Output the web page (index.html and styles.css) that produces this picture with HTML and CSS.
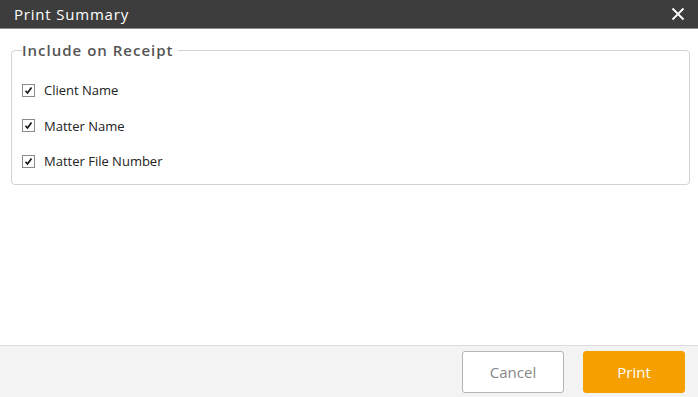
FILE: index.html
```html
<!DOCTYPE HTML>
<html>
    <head>
        <title>Print Summary</title>
        <link rel="stylesheet" href="styles.css">
    </head>

    <body>
        <div class="dialog">
            <div class="titlebar">
                <span class="title">Print Summary</span>
                <svg class="close" width="14" height="14" viewBox="0 0 14 14">
                    <path d="M1.5 1.5 L12.5 12.5 M12.5 1.5 L1.5 12.5" stroke="#fff" stroke-width="1.8" fill="none"/>
                </svg>
            </div>

            <div class="content">
                <fieldset class="receipt">
                    <legend>Include on Receipt</legend>
                    <label class="option"><span class="box"><svg width="11" height="11" viewBox="0 0 11 11"><path d="M2.5 5.8 L4.5 8 L8.5 2.5" stroke="#111" stroke-width="1.6" fill="none"/></svg></span>Client Name</label>
                    <label class="option"><span class="box"><svg width="11" height="11" viewBox="0 0 11 11"><path d="M2.5 5.8 L4.5 8 L8.5 2.5" stroke="#111" stroke-width="1.6" fill="none"/></svg></span>Matter Name</label>
                    <label class="option"><span class="box"><svg width="11" height="11" viewBox="0 0 11 11"><path d="M2.5 5.8 L4.5 8 L8.5 2.5" stroke="#111" stroke-width="1.6" fill="none"/></svg></span>Matter File Number</label>
                </fieldset>
            </div>

            <div class="footer">
                <button class="btn cancel">Cancel</button>
                <button class="btn print">Print</button>
            </div>
        </div>
    </body>
</html>
```

FILE: styles.css
```css
body {
    margin: 0;
    font-family: "Open Sans", "Noto Sans", sans-serif;
    background: #fff;
}
.dialog {
    width: 698px;
    height: 397px;
    display: flex;
    flex-direction: column;
}
.titlebar {
    height: 28px;
    background: #3d3d3d;
    border-bottom: 1px solid #8a8a8a;
    display: flex;
    align-items: center;
    justify-content: space-between;
    padding: 0 13px 0 14px;
}
.title {
    color: #fff;
    font-size: 15px;
    letter-spacing: 0.8px;
}
.content {
    flex: 1;
    padding: 11px 8px 0 11px;
}
fieldset.receipt {
    margin: 0;
    border: 1px solid #d3d3d3;
    border-radius: 4px;
    padding: 19px 10px 12px 10px;
    display: flex;
    flex-direction: column;
    gap: 13.5px;
}
legend {
    padding: 0 4px 0 0;
    font-size: 15px;
    font-weight: 600;
    color: #555;
    letter-spacing: 1px;
}
.option {
    display: flex;
    align-items: center;
    font-size: 13px;
    color: #222;
    height: 22px;
}
.box {
    width: 11px;
    height: 11px;
    border: 1px solid #8a8a8a;
    background: #fff;
    margin-right: 9px;
    display: flex;
}
.footer {
    height: 51px;
    background: #f3f3f3;
    border-top: 1px solid #dcdcdc;
    display: flex;
    justify-content: flex-end;
    align-items: center;
    gap: 19px;
    padding: 0 13px 0 0;
}
.btn {
    width: 102px;
    height: 42px;
    border-radius: 3px;
    font-family: "Open Sans", "Noto Sans", sans-serif;
    font-size: 15px;
}
.cancel {
    background: #fff;
    border: 1px solid #b5b5b5;
    color: #888;
}
.print {
    background: #f59f00;
    border: 1px solid #f59f00;
    color: #fff;
}
```
